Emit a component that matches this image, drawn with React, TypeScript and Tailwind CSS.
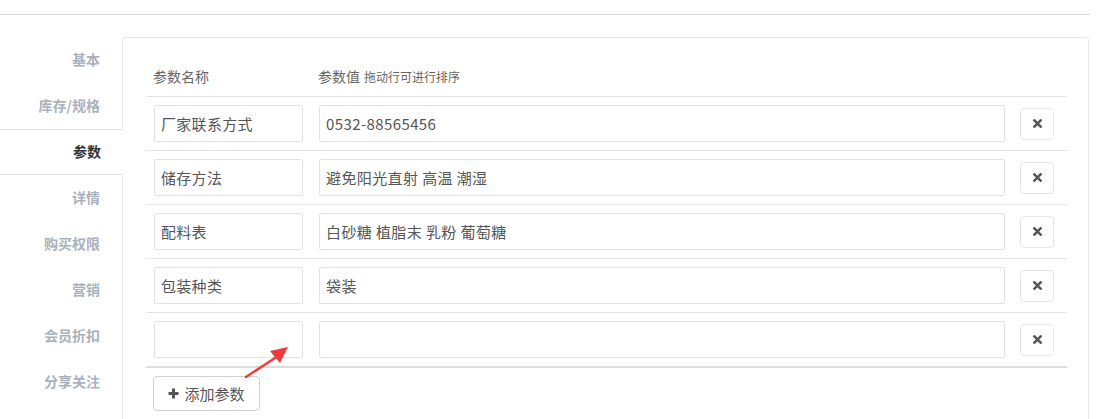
import React from "react";

const tabs = ["基本", "库存/规格", "参数", "详情", "购买权限", "营销", "会员折扣", "分享关注"];
const rows: [string, string][] = [
  ["厂家联系方式", "0532-88565456"],
  ["储存方法", "避免阳光直射 高温 潮湿"],
  ["配料表", "白砂糖 植脂末 乳粉 葡萄糖"],
  ["包装种类", "袋装"],
  ["", ""],
];

function XIcon() {
  return (
    <svg width="9" height="9" viewBox="0 0 9 9">
      <path d="M1.4 1.4 L7.6 7.6 M7.6 1.4 L1.4 7.6" stroke="#555" strokeWidth="2.5" strokeLinecap="square" />
    </svg>
  );
}

function PlusIcon() {
  return (
    <svg width="11" height="11" viewBox="0 0 11 11">
      <path d="M5.5 0.5 V10.5 M0.5 5.5 H10.5" stroke="#555" strokeWidth="3" />
    </svg>
  );
}

export default function App() {
  const font = { fontFamily: '"Noto Sans CJK SC", "Noto Sans", sans-serif' };
  return (
    <div className="w-[1096px] h-[419px] overflow-hidden bg-white relative" style={font}>
      <div className="mt-[14px] h-px w-[1090px] bg-[#d6d6d6]" />
      <div className="flex mt-[22px]">
        <div className="w-[122px] shrink-0 flex flex-col">
          {tabs.map((t, i) => (
            <div
              key={t}
              className={
                i === 2
                  ? "relative z-10 w-[123px] h-[46px] bg-white border-y border-[#e5e5e5] flex items-center justify-end pr-[22px] pb-[3px] text-[14px] font-bold text-[#333] leading-none"
                  : "h-[46px] flex items-center justify-end pr-[22px] pb-[3px] text-[14px] font-bold text-[#a9b1bd] leading-none"
              }
            >
              {t}
            </div>
          ))}
        </div>
        <div className="w-[967px] h-[420px] border border-[#e6e6e6] rounded-t-[3px] pl-[23px] pr-[21px] pt-[21px]">
          <div className="w-[921px]">
            <div className="flex h-[38px] items-center border-b border-[#e3e3e3] text-[14px] text-[#666] leading-none">
              <div className="w-[165px] pl-[7px] pb-[3px]">参数名称</div>
              <div className="w-[702px] pl-[7px] pb-[3px] flex items-baseline">
                <span>参数值</span>
                <span className="ml-[4px] text-[12px]">拖动行可进行排序</span>
              </div>
            </div>
            {rows.map(([n, v], i) => (
              <div
                key={i}
                className={
                  i === rows.length - 1
                    ? "flex h-[55px] items-center border-b-2 border-[#dcdcdc]"
                    : "flex h-[54px] items-center border-b border-[#e3e3e3]"
                }
              >
                <div className="w-[165px] pl-[8px]">
                  <div className="w-[149px] h-[37px] border border-[#e2e2e2] rounded-[2px] flex items-center px-[6px] text-[15px] text-[#555] leading-none tracking-[0.3px]">
                    {n}
                  </div>
                </div>
                <div className="w-[702px] pl-[8px]">
                  <div className="w-[686px] h-[37px] border border-[#e2e2e2] rounded-[2px] flex items-center px-[6px] text-[15px] text-[#555] leading-none tracking-[0.4px]">
                    {v}
                  </div>
                </div>
                <div className="w-[54px] pl-[7px]">
                  <div className="w-[34px] h-[32px] border border-[#e6e6e6] rounded-[4px] flex items-center justify-center">
                    <XIcon />
                  </div>
                </div>
              </div>
            ))}
            <div className="pt-[8px] pl-[7px]">
              <div className="w-[107px] h-[35px] border border-[#cfcfcf] rounded-[4px] flex items-center justify-center gap-[5px] text-[15px] text-[#555] leading-none">
                <PlusIcon />
                <span>添加参数</span>
              </div>
            </div>
          </div>
        </div>
      </div>
      <svg className="absolute left-[240px] top-[340px]" width="60" height="45" viewBox="0 0 60 45">
        <path d="M6 37 L38 16" stroke="#f03a3a" strokeWidth="2.4" strokeLinecap="round" />
        <path d="M48 7 L30 11 L40 23 Z" fill="#f03a3a" />
      </svg>
    </div>
  );
}
